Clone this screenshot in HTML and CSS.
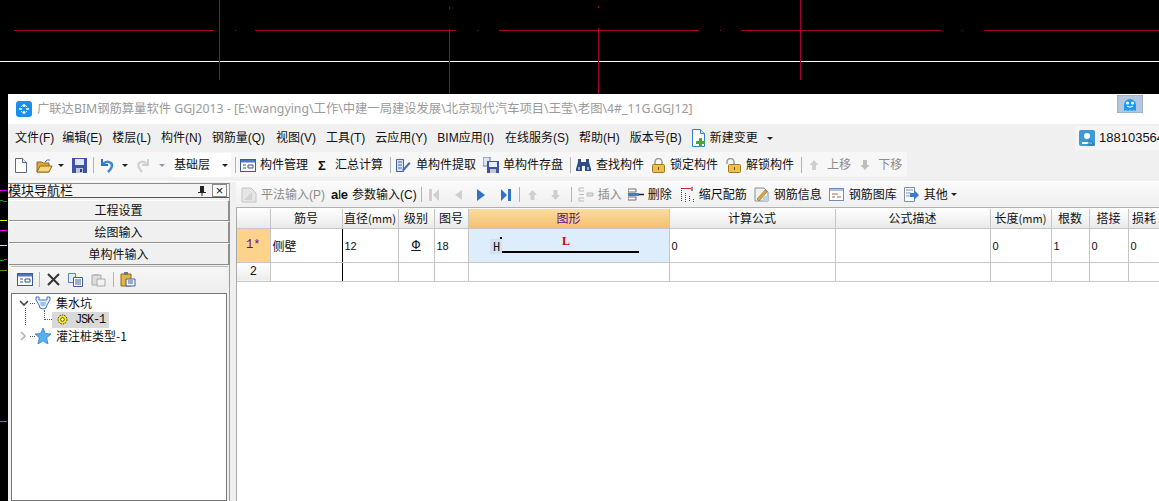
FILE: index.html
```html
<!DOCTYPE html>
<html lang="zh">
<head>
<meta charset="utf-8">
<title>广联达BIM钢筋算量软件</title>
<link rel="stylesheet" href="styles.css">
</head>
<body>
<div class="page">
  <svg class="cad-top" width="1159" height="94" viewBox="0 0 1159 94">
    <rect x="0" y="61" width="1159" height="1" fill="#fff"/>
    <g stroke="#a60033" stroke-width="1" fill="none" shape-rendering="crispEdges">
      <path d="M14 30.500H214M235 30.500H236M255 30.500H456M477 30.500H478M499 30.500H699M720 30.500H721M741 30.500H941M962 30.500H963M984 30.500H1159"/>
      <path d="M219.500 0V80M800.500 0V80M449.500 7V9M449.500 29V94M598.500 6V8M598.500 28V94"/>
    </g>
  </svg>
  <div class="lower">
    <svg class="cad-strip" width="8" height="407" viewBox="0 0 8 407">
      <g fill="none" stroke-width="1" shape-rendering="crispEdges">
        <path d="M0 96.500H7" stroke="#c800e0"/>
        <path d="M0 106.500H3M3 107.500H7" stroke="#1f9a2a"/>
        <path d="M0 126.500H7" stroke="#f0f000"/>
        <path d="M0 136.500H7" stroke="#f000d0"/>
        <path d="M0 151.500H7" stroke="#f0f000"/>
        <path d="M0 166.500H4M4 165.500H7" stroke="#1f9a2a"/>
        <path d="M0 176.500H7" stroke="#7a8a10"/>
        <path d="M0 327.500H7" stroke="#7a8a10"/>
      </g>
    </svg>
    <div class="window">
      <header class="titlebar">
        <svg class="logo" width="16" height="16" viewBox="0 0 16 16">
          <rect width="16" height="16" rx="3" fill="#1a8ff0"/>
          <path d="M8 3v3M8 10v3M3 8h3M10 8h3" stroke="#fff" stroke-width="1.500"/>
          <path d="M5 6a3.500 3.500 0 0 1 6 0M11 10a3.500 3.500 0 0 1-6 0" stroke="#fff" fill="none"/>
        </svg>
        <span class="title">广联达BIM钢筋算量软件 GGJ2013 - [E:\wangying\工作\中建一局建设发展\北京现代汽车项目\王莹\老图\4#_11G.GGJ12]</span>
        <svg class="robot" width="26" height="18" viewBox="0 0 26 18">
          <rect width="26" height="18" fill="#b3c7df" stroke="#8ea2b8"/>
          <path d="M7 10a6 6 0 0 1 12 0v6l-2-1-2 1-2-1-2 1-2-1-2 1z" fill="#1f9bee"/>
          <circle cx="10.500" cy="8" r="1.500" fill="#fff"/><circle cx="15.500" cy="8" r="1.500" fill="#fff"/>
          <path d="M10 11q3 2.500 6 0" stroke="#fff" fill="none"/>
        </svg>
      </header>

      <nav class="menubar">
        <span>文件(F)</span><span class="m-edit">编辑(E)</span><span>楼层(L)</span><span>构件(N)</span><span>钢筋量(Q)</span><span class="m-view">视图(V)</span><span>工具(T)</span><span>云应用(Y)</span><span>BIM应用(I)</span><span class="m-online">在线服务(S)</span><span>帮助(H)</span><span>版本号(B)</span>
        <span class="menu-change">
          <svg width="16" height="18" viewBox="0 0 16 18"><path d="M1.500.5h8l4 4v13h-12z" fill="#fff" stroke="#2f80c8"/><path d="M9.500.5v4h4" fill="#cfe4f7" stroke="#2f80c8"/><path d="M8 9h3v3h3v3h-3v3H8v-3H5v-3h3z" fill="#4aa83a"/></svg>
          新建变更<i class="caret dark change-caret"></i>
        </span>
        <span class="user">
          <svg width="16" height="16" viewBox="0 0 16 16"><rect width="16" height="16" rx="2" fill="#3d9ad6"/><circle cx="8" cy="6" r="3" fill="#fff"/><path d="M3 12h10v2H3z" fill="#fff"/><path d="M10 9l6 5v2H8z" fill="#2f7ea9" opacity=".7"/></svg>
          188103564
        </span>
      </nav>

      <div class="toolbar-row">
        <div class="toolbar">
          <button class="tb t-new" type="button"><svg width="12" height="15" viewBox="0 0 12 15"><path d="M.5.5h7l4 4v10H.5z" fill="#fff" stroke="#5a6a80"/><path d="M7.500.5v4h4" fill="#dfe6ef" stroke="#5a6a80"/></svg></button>
          <button class="tb t-open" type="button"><svg width="17" height="15" viewBox="0 0 17 15"><path d="M1 4h5l1 1h6v9H1z" fill="#d9a93a" stroke="#8f6a1c"/><path d="M1 14l3-6h12l-3 6z" fill="#f6d77c" stroke="#8f6a1c"/><path d="M9 4q2-3 5-2" stroke="#3a6fb0" fill="none"/></svg></button>
          <i class="caret dark t-c1"></i>
          <button class="tb t-save" type="button"><svg width="15" height="15" viewBox="0 0 15 15"><path d="M0 0h15v15H0z" fill="#3f52a6"/><path d="M3 1h9v6H3z" fill="#dfe6f2"/><path d="M4 10h7v5H4z" fill="#bfc6d6"/><path d="M8 11h2v3H8z" fill="#2c3a78"/></svg></button>
          <i class="sep t-s1"></i>
          <button class="tb t-undo" type="button"><svg width="15" height="15" viewBox="0 0 15 15"><path d="M2 1v6h6" fill="none" stroke="#2e74c4" stroke-width="2"/><path d="M3 6q4-4 8-1 3 3-3 9" fill="none" stroke="#3b86d8" stroke-width="2.500"/></svg></button>
          <i class="caret dark t-c2"></i>
          <button class="tb t-redo" type="button"><svg width="13" height="15" viewBox="0 0 13 15"><path d="M12 1v6H6" fill="none" stroke="#cfcfcf" stroke-width="2"/><path d="M11 6Q7 2 3 5q-2 3 3 9" fill="none" stroke="#d4d4d4" stroke-width="2.500"/></svg></button>
          <i class="caret gray t-c3"></i>
          <span class="floor">基础层<i class="caret dark"></i></span>
          <i class="sep t-s2"></i>
          <span class="ti t-mgmt"><svg width="16" height="13" viewBox="0 0 16 13"><rect x=".5" y=".5" width="15" height="12" fill="#fff" stroke="#3c58a0"/><path d="M1 1h14v2.500H1z" fill="#4f76c4"/><path d="M3 6h3M3 9h3M8 6h5v3H8z" stroke="#3c4f80" fill="none"/></svg>构件管理</span>
          <span class="ti t-sum"><b class="sigma">Σ</b>汇总计算</span>
          <i class="sep t-s3"></i>
          <span class="ti t-extract"><svg width="15" height="15" viewBox="0 0 15 15"><path d="M.5 1.500h7v12h-7z" fill="#dbe4f4" stroke="#46629e"/><path d="M2 4h4M2 7h4M2 10h4" stroke="#46629e"/><path d="M6 12l7-8 1.500 1.500-7 8z" fill="#4c6cb0"/></svg>单构件提取</span>
          <span class="ti t-store"><svg width="16" height="16" viewBox="0 0 16 16"><path d="M0 0h7v9H0z" fill="#dfe6f2" stroke="#5c78b0"/><path d="M4 4h12v12H4z" fill="#3f52a6"/><path d="M6 5h8v5H6z" fill="#e8edf6"/><path d="M7 12h6v4H7z" fill="#bfc6d6"/></svg>单构件存盘</span>
          <i class="sep t-s4"></i>
          <span class="ti t-find"><svg width="15" height="14" viewBox="0 0 15 14"><path d="M2 1h3v3h5V1h3v3l2 7v2H9V8H6v5H0v-2l2-7z" fill="#2e4d88"/><path d="M2 9h2v3H2zM11 9h2v3h-2z" fill="#8fb0dd"/></svg>查找构件</span>
          <span class="ti t-lock"><svg width="13" height="15" viewBox="0 0 13 15"><path d="M3 7V4a3.500 3.500 0 0 1 7 0v3" fill="none" stroke="#9a9a9a" stroke-width="1.500"/><rect x=".5" y="6.500" width="12" height="8" rx="1" fill="#eebf4e" stroke="#a27a1e"/><path d="M6 9h1v3H6z" fill="#6a4d0e"/></svg>锁定构件</span>
          <span class="ti t-unlock"><svg width="15" height="15" viewBox="0 0 15 15"><path d="M1 6V4a3.500 3.500 0 0 1 7 0v3" fill="none" stroke="#9a9a9a" stroke-width="1.500"/><rect x="2.500" y="6.500" width="12" height="8" rx="1" fill="#eebf4e" stroke="#a27a1e"/><path d="M8 9h1v3H8z" fill="#6a4d0e"/></svg>解锁构件</span>
          <i class="sep t-s5"></i>
          <span class="ti dim t-up"><svg width="10" height="12" viewBox="0 0 10 12"><path d="M5 1l4.500 5H7v5H3V6H.5z" fill="#cfcfcf"/></svg>上移</span>
          <span class="ti dim t-down"><svg width="10" height="12" viewBox="0 0 10 12"><path d="M5 11L.5 6H3V1h4v5h2.500z" fill="#bdbdbd"/></svg>下移</span>
        </div>
      </div>

      <div class="workspace">
        <aside class="nav-panel">
          <div class="nav-head">
            <span class="nav-title">模块导航栏</span>
            <svg class="pin" width="8" height="10" viewBox="0 0 8 10"><path d="M2 0h4v6h2v1H4.500v3h-1V7H0V6h2z" fill="#222"/></svg>
            <span class="nav-close">×</span>
          </div>
          <button class="nav-btn first" type="button">工程设置</button>
          <button class="nav-btn" type="button">绘图输入</button>
          <button class="nav-btn" type="button">单构件输入</button>
          <div class="nav-body">
            <div class="tree-tools">
              <svg class="tt-a" width="16" height="13" viewBox="0 0 16 13"><rect x=".5" y=".5" width="15" height="12" fill="#fff" stroke="#3c58a0"/><path d="M1 1h14v2.500H1z" fill="#4f76c4"/><path d="M3 6h3M3 9h3M8 6h5v3H8z" stroke="#3c4f80" fill="none"/></svg>
              <i class="sep"></i>
              <svg class="tt-x" width="13" height="13" viewBox="0 0 13 13"><path d="M1 1l11 11M12 1L1 12" stroke="#333" stroke-width="2"/></svg>
              <svg class="tt-c" width="15" height="14" viewBox="0 0 15 14"><path d="M.5.5h7v9h-7z" fill="#e4ecf8" stroke="#5c82c0"/><path d="M5.500 4.500h9v9h-9z" fill="#fff" stroke="#3f5ea0"/><path d="M7 7h6M7 9h6M7 11h6" stroke="#3f5ea0"/></svg>
              <svg class="tt-p" width="15" height="14" viewBox="0 0 15 14"><path d="M1 2h9v10H1z" fill="#ddd" stroke="#aaa"/><path d="M3 1h5v2H3z" fill="#bbb"/><path d="M6 6h8v7H6z" fill="#f2f2f2" stroke="#aaa"/></svg>
              <i class="sep"></i>
              <svg class="tt-v" width="16" height="15" viewBox="0 0 16 15"><path d="M1 2h10v12H1z" fill="#e4b43e" stroke="#8f6a1c"/><path d="M4 0h4v3H4z" fill="#777"/><path d="M6 7h9v7H6z" fill="#f4f6fa" stroke="#3f5ea0"/><path d="M8 9h5M8 11h5" stroke="#3f5ea0"/></svg>
            </div>
            <div class="tree">
              <div class="tree-row">
                <svg class="chev" width="10" height="6" viewBox="0 0 10 6"><path d="M1 1l4 4 4-4" fill="none" stroke="#444" stroke-width="1.600"/></svg>
                <i class="dots-h"></i>
                <svg class="t-ico" width="16" height="15" viewBox="0 0 16 15"><path d="M1 1h3v3h8V1h3v3l-3 5a4 4 0 0 1-8 0L1 4z" fill="#e9f2fb" stroke="#3c74c4"/><path d="M5 6h6l-1 4H6z" fill="#9cc0e8"/></svg>
                <span>集水坑</span>
              </div>
              <div class="tree-row child">
                <i class="dots-v"></i>
                <i class="dots-corner"></i>
                <span class="selected">
                  <svg width="11" height="11" viewBox="0 0 11 11"><circle cx="5.500" cy="5.500" r="4.500" fill="#f8ea10" stroke="#333" stroke-dasharray="1.500 1"/><circle cx="5.500" cy="5.500" r="1.800" fill="#fff" stroke="#333" stroke-width=".8"/></svg>
                  <span class="mono">JSK-1</span>
                </span>
              </div>
              <div class="tree-row">
                <svg class="chev right" width="6" height="10" viewBox="0 0 6 10"><path d="M1 1l4 4-4 4" fill="none" stroke="#b5b5b5" stroke-width="1.600"/></svg>
                <i class="dots-h"></i>
                <svg class="t-ico" width="16" height="16" viewBox="0 0 16 16"><path d="M8 0l2.300 5.500L16 6l-4.300 3.700L13 16l-5-3.200L3 16l1.300-6.300L0 6l5.700-.5z" fill="#59aef0" stroke="#2f7fd0" stroke-width=".8"/></svg>
                <span>灌注桩类型-1</span>
              </div>
            </div>
          </div>
        </aside>

        <main class="editor">
          <div class="edit-tools">
            <span class="ti dim e-flat"><svg width="16" height="16" viewBox="0 0 16 16"><path d="M1 1h9l5 5v9H1z" fill="#e6e6e6" stroke="#c4c4c4"/><path d="M3 13l8-8v8z" fill="#d2d2d2"/></svg>平法输入(P)</span>
            <span class="ti e-param"><b class="abe">a<u>I</u>e</b>参数输入(C)</span>
            <i class="sep e-s1"></i>
            <svg class="e-first" width="10" height="14" viewBox="0 0 10 14"><path d="M0 1h3v12H0zM10 1v12L4 7z" fill="#cfcfcf"/></svg>
            <svg class="e-prev" width="7" height="14" viewBox="0 0 7 14"><path d="M7 2v10L0 7z" fill="#cfcfcf"/></svg>
            <svg class="e-next" width="8" height="14" viewBox="0 0 8 14"><path d="M0 1v12l8-6z" fill="#2f74c8"/></svg>
            <svg class="e-last" width="10" height="14" viewBox="0 0 10 14"><path d="M0 1v12l6-6zM7 1h3v12H7z" fill="#2f74c8"/></svg>
            <i class="sep e-s2"></i>
            <svg class="e-up" width="9" height="10" viewBox="0 0 9 10"><path d="M4.500 0L9 5H6.500v5h-4V5H0z" fill="#cfcfcf"/></svg>
            <svg class="e-down" width="9" height="10" viewBox="0 0 9 10"><path d="M4.500 10L0 5h2.500V0h4v5H9z" fill="#cfcfcf"/></svg>
            <i class="sep e-s3"></i>
            <span class="ti dim e-insert"><svg width="16" height="15" viewBox="0 0 16 15"><path d="M6 1H1v3h5M6 11H1v3h5M1 7.500h5" fill="none" stroke="#bbb"/><path d="M9 6h6v3H9z" fill="#ddd" stroke="#bbb"/></svg>插入</span>
            <span class="ti e-del"><svg width="16" height="13" viewBox="0 0 16 13"><path d="M0 1h8v3H0zM0 9h8v3H0z" fill="#fff" stroke="#333" stroke-width=".7"/><path d="M0 5h11v3H0z" fill="#3c7fd0"/><path d="M11 6.500h5" stroke="#222" stroke-width="1.500"/></svg>删除</span>
            <span class="ti e-scale"><svg width="13" height="15" viewBox="0 0 13 15"><path d="M.5 1v14M4.500 6v9M8.500 9v6M12.500 12v3" stroke="#444" stroke-dasharray="1 1"/><path d="M1 1.500h9" stroke="#c03030"/><path d="M11 0v4" stroke="#222"/></svg>缩尺配筋</span>
            <span class="ti e-info"><svg width="15" height="15" viewBox="0 0 15 15"><path d="M1 1h9l4 4v9H1z" fill="#f5f0e4" stroke="#7f92ac"/><path d="M3 12l8-9 2 2-8 9z" fill="#d8a848" stroke="#7a5a20" stroke-width=".5"/><path d="M9 9h5v5H9z" fill="#bcd3ee"/></svg>钢筋信息</span>
            <span class="ti e-lib"><svg width="15" height="13" viewBox="0 0 15 13"><rect x=".5" y=".5" width="14" height="12" fill="#fff" stroke="#6f8cb8"/><path d="M1 1h13v2H1z" fill="#a9c2e2"/><path d="M3 6h6M3 9h3M8 9h4" stroke="#a07040"/></svg>钢筋图库</span>
            <span class="ti e-other"><svg width="15" height="15" viewBox="0 0 15 15"><path d="M.5.500h10v14H.5z" fill="#fff" stroke="#7f8ea8"/><path d="M2 3h7M2 6h5M2 9h5" stroke="#7f8ea8"/><path d="M6 6h4V3l5 5-5 5v-3H6z" fill="#3f78c8"/></svg>其他<i class="caret dark small"></i></span>
          </div>

          <div class="grid-wrap">
            <table class="grid">
              <colgroup>
                <col class="c-row"><col class="c-no"><col class="c-dia"><col class="c-lvl"><col class="c-fig"><col class="c-shape"><col class="c-calc"><col class="c-desc"><col class="c-len"><col class="c-cnt"><col class="c-lap"><col class="c-loss">
              </colgroup>
              <thead>
                <tr>
                  <th></th><th>筋号</th><th>直径<span class="unit">(mm)</span></th><th>级别</th><th>图号</th><th class="active">图形</th><th>计算公式</th><th>公式描述</th><th>长度<span class="unit">(mm)</span></th><th>根数</th><th>搭接</th><th>损耗</th>
                </tr>
              </thead>
              <tbody>
                <tr class="r1">
                  <th class="rowh current">1*</th>
                  <td class="name">侧壁</td>
                  <td class="num">12</td>
                  <td class="center grade"><span class="grade-mark">Φ</span></td>
                  <td class="num">18</td>
                  <td class="shape">
                    <svg width="200" height="32" viewBox="0 0 200 32">
                      <rect x="21" y="10" width="12" height="15" fill="#d2e2f1"/>
                      <text x="24" y="22" class="svg-h">H</text>
                      <rect x="31" y="8" width="2" height="2" fill="#000"/>
                      <text x="93" y="16" class="svg-l">L</text>
                      <rect x="33" y="22" width="137" height="2" fill="#000"/>
                    </svg>
                  </td>
                  <td class="num">0</td>
                  <td></td>
                  <td class="num">0</td>
                  <td class="num">1</td>
                  <td class="num">0</td>
                  <td class="num">0</td>
                </tr>
                <tr class="r2">
                  <th class="rowh">2</th>
                  <td></td><td></td><td></td><td></td><td></td><td></td><td></td><td></td><td></td><td></td><td></td>
                </tr>
              </tbody>
            </table>
          </div>
        </main>
      </div>
    </div>
  </div>
</div>
</body>
</html>
```
FILE: styles.css
```css
* { box-sizing: border-box; }
html, body { margin: 0; padding: 0; background: #000; }
body {
  width: 1159px;
  height: 501px;
  overflow: hidden;
  font: 12px/16px "Liberation Sans", "Noto Sans CJK SC", sans-serif;
  color: #111;
}
svg { display: block; flex: none; }
.page { width: 1159px; height: 501px; display: flex; flex-direction: column; }
.lower { display: flex; flex: 1; min-height: 0; }
.cad-strip { background: #000; }
.window { flex: 1; min-width: 0; background: #f0f0f0; display: flex; flex-direction: column; overflow: hidden; }

.titlebar { height: 30px; background: #fff; display: flex; align-items: center; padding-left: 8px; flex: none; }
.title { margin-left: 5px; font-size: 12.300px; color: #9b9b9b; white-space: nowrap; font-family: "Noto Sans", "Noto Sans CJK SC", sans-serif; }
.robot { margin-left: auto; margin-right: 16px; align-self: flex-start; margin-top: 1px; }

.menubar { height: 28px; flex: none; display: flex; align-items: center; padding-left: 7px; gap: 10px; white-space: nowrap; font-size: 12px; }
.m-edit { margin-left: -2px; }
.m-view { margin-left: 1px; }
.m-online { margin-left: 1px; }
.menu-change { display: flex; align-items: center; margin-left: -1px; gap: 3px; }
.change-caret { margin-left: 6px; }
.user { margin-left: auto; display: flex; align-items: center; gap: 4px; width: 84px; height: 24px; background: #f5f5f5; padding-left: 4px; font-size: 13px; overflow: hidden; flex: none; }

.caret { display: inline-block; width: 0; height: 0; border-left: 3px solid transparent; border-right: 3px solid transparent; border-top: 3px solid #222; flex: none; }
.caret.gray { border-top-color: #999; }
.caret.small { margin-left: -2px; }
.sep { display: block; width: 1px; height: 16px; background: #b4b4b4; flex: none; }

.toolbar-row { height: 30px; flex: none; padding-left: 2px; border-bottom: 1px solid #fff; }
.toolbar { width: 897px; height: 25px; padding-top: 1px; background: #f7f7f7; border-radius: 3px; display: flex; align-items: center; white-space: nowrap; }
.tb { border: 0; padding: 0; background: none; display: block; flex: none; }
.ti { display: flex; align-items: center; flex: none; white-space: nowrap; gap: 4px; }
.dim { color: #8c8c8c; }

.t-new { margin-left: 5px; }
.t-open { margin-left: 9px; }
.t-c1 { margin-left: 5px; }
.t-save { margin-left: 8px; }
.t-s1 { margin-left: 6px; }
.t-undo { margin-left: 6px; }
.t-c2 { margin-left: 7px; }
.t-redo { margin-left: 8px; }
.t-c3 { margin-left: 10px; }
.floor { margin-left: 7px; width: 59px; height: 24px; background: #fff; display: flex; align-items: center; padding-left: 2px; flex: none; justify-content: space-between; padding-right: 3px; font-size: 12px; }
.t-s2 { margin-left: 4px; }
.t-mgmt { margin-left: 4px; }
.t-sum { margin-left: 10px; gap: 8px; }
.sigma { font: bold 13px "Liberation Sans", sans-serif; width: 9px; }
.t-s3 { margin-left: 7px; }
.t-extract { margin-left: 5px; gap: 5px; }
.t-store { margin-left: 7px; gap: 4px; }
.t-s4 { margin-left: 7px; }
.t-find { margin-left: 5px; gap: 5px; }
.t-lock { margin-left: 8px; gap: 5px; }
.t-unlock { margin-left: 8px; gap: 5px; }
.t-s5 { margin-left: 7px; }
.t-up { margin-left: 7px; gap: 8px; }
.t-down { margin-left: 9px; gap: 8px; }

.workspace { flex: 1; min-height: 0; display: flex; }

.nav-panel { width: 222px; flex: none; display: flex; flex-direction: column; margin-top: 1px; border-right: 1px solid #9a9a9a; }
.nav-head { height: 15px; display: flex; align-items: center; flex: none; border-top: 1px solid #8a8a8a; border-bottom: 1px solid #555; background: #f4f4f4; font-size: 13px; }
.pin { margin-left: auto; margin-right: 6px; }
.nav-close { width: 15px; height: 13px; border: 1px solid #888; margin-right: 2px; font-size: 13px; line-height: 11px; text-align: center; background: #fbfbfb; }
.nav-btn { height: 22px; flex: none; display: block; width: 221px; margin-left: 1px; padding: 0 0 1px; background: #f0f0f0; border: 0; border-top: 1px solid #fff; border-bottom: 1px solid #8f8f8f; border-right: 2px solid #8f8f8f; font: 12px/18px "Noto Sans CJK SC", sans-serif; color: #111; text-align: center; }
.nav-btn.first { margin-top: 2px; height: 21px; }
.nav-body { flex: 1; min-height: 0; margin: 1px 1px 0 3px; display: flex; flex-direction: column; border-top: 1px solid #bdbdbd; }
.tree-tools { height: 25px; flex: none; display: flex; align-items: center; background: linear-gradient(#f7f7f7, #eeeeee); padding-left: 6px; margin-right: 2px; }
.tree-tools .sep { height: 15px; }
.tt-a + .sep { margin-left: 6px; }
.tt-x { margin-left: 7px; }
.tt-c { margin-left: 8px; }
.tt-p { margin-left: 8px; }
.tt-p + .sep { margin-left: 7px; }
.tt-v { margin-left: 6px; }

.tree { flex: 1; min-height: 0; background: #fff; border: 1px solid #777; margin-top: 1px; margin-right: 1px; padding-top: 1px; }
.tree-row { height: 16.500px; display: flex; align-items: center; white-space: nowrap; padding-left: 7px; font: 12px/16px "Noto Sans CJK SC", sans-serif; }
.chev.right { margin-left: 1px; margin-right: 3px; }
.dots-h { display: block; width: 5px; border-top: 1px dotted #555; margin-left: 1px; flex: none; }
.t-ico { margin-right: 5px; }
.tree-row.child { position: relative; padding-left: 40px; }
.dots-v { position: absolute; left: 13px; top: -4px; height: 17px; border-left: 1px dotted #555; }
.dots-corner { display: block; position: absolute; left: 32px; top: -2px; width: 8px; height: 10px; border-left: 1px dotted #555; border-bottom: 1px dotted #555; }
.selected { display: flex; align-items: center; background: #d9d9d9; width: 57px; height: 16px; padding-left: 5px; gap: 7px; }
.mono { font: 12px/16px "Liberation Mono", monospace; letter-spacing: -1.200px; }

.editor { flex: 1; min-width: 0; margin-left: 6px; display: flex; flex-direction: column; }
.edit-tools { height: 26px; flex: none; display: flex; align-items: center; background: linear-gradient(#fbfbfb, #efefef); border-bottom: 1px solid #b0b0b0; padding-left: 5px; white-space: nowrap; }
.edit-tools .sep { height: 15px; }
.abe { font: bold 13px "Liberation Sans", sans-serif; width: 15px; letter-spacing: -.5px; }
.abe u { text-decoration: none; font-weight: normal; }
.e-param { margin-left: 6px; gap: 6px; }
.e-s1 { margin-left: 4px; }
.e-first { margin-left: 7px; }
.e-prev { margin-left: 16px; }
.e-next { margin-left: 15px; }
.e-last { margin-left: 16px; }
.e-s2 { margin-left: 8px; }
.e-up { margin-left: 8px; }
.e-down { margin-left: 14px; }
.e-s3 { margin-left: 11px; }
.e-insert { margin-left: 6px; }
.e-del { margin-left: 6px; }
.e-scale { margin-left: 9px; gap: 5px; }
.e-info { margin-left: 7px; gap: 5px; }
.e-lib { margin-left: 7px; gap: 5px; }
.e-other { margin-left: 7px; gap: 5px; }

.grid-wrap { flex: 1; min-height: 0; background: #fff; border-left: 1px solid #aaa; overflow: hidden; }
.grid { table-layout: fixed; border-collapse: collapse; width: 923px; font: 12px/16px "Noto Sans CJK SC", sans-serif; color: #111; margin-top: 1px; }
.c-row { width: 33px; }
.c-no { width: 72px; }
.c-dia { width: 56px; }
.c-lvl { width: 36px; }
.c-fig { width: 34px; }
.c-shape { width: 201px; }
.c-calc { width: 166px; }
.c-desc { width: 155px; }
.c-len { width: 61px; }
.c-cnt { width: 38px; }
.c-lap { width: 39px; }
.c-loss { width: 32px; }
.grid th, .grid td { border: 1px solid #c6c6c6; padding: 0; font-weight: normal; }
.grid tr > :first-child { border-left: 0; }
.grid thead th { height: 19px; background: linear-gradient(#ffffff, #e9e9e9); border-top: 0; text-align: center; white-space: nowrap; overflow: hidden; }
.grid thead th.active { background: linear-gradient(#fbdc9f, #f3c070); color: #5e0a8c; }
.unit { font-size: 11px; }
.r1 td, .r1 th { height: 34px; }
.r2 td, .r2 th { height: 19px; }
.rowh { background: linear-gradient(#ffffff, #ececec); text-align: center; font: 12px "Liberation Mono", monospace !important; }
.rowh.current { background: #fdd28a; color: #5e0a8c; }
.grid td.name { padding: 1px 0 0 2px; }
.grid td.num { padding: 1px 0 0 2px; font: 11px "Liberation Sans", sans-serif; }
.center { text-align: center; }
.grade { font: 12px "DejaVu Sans", sans-serif !important; }
.grade-mark { text-decoration: underline; text-underline-offset: 1px; }
.grid tbody td:nth-child(2) { border-right: 1px solid #000; }
.grid td.shape { background: #deedfb; border: 1px dotted #000; }
.svg-h { font: 12px "Liberation Mono", monospace; fill: #111; }
.svg-l { font: bold 12px "Liberation Serif", serif; fill: #e00000; }
```
